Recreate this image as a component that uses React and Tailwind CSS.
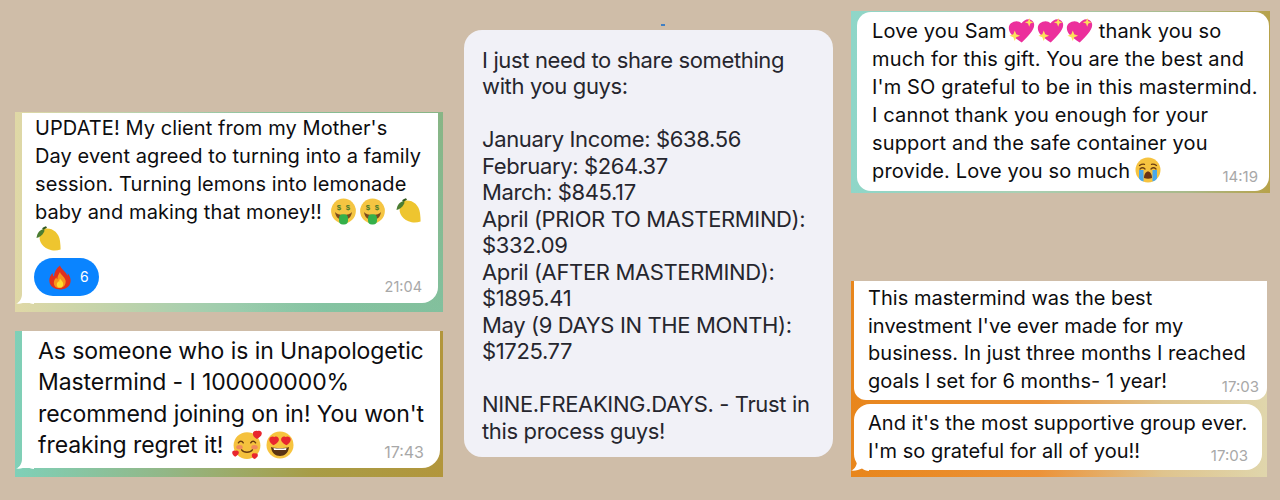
import React from "react";

const Money = () => (
  <svg viewBox="0 0 24 24" className="inline-block w-[27px] h-[27px] mx-[-1px] align-[-6px]">
    <circle cx="12" cy="11.5" r="11" fill="#f5c542" />
    <path d="M4.5 12.5c2 3.4 13 3.4 15 0-.6 5-3.4 7-7.5 7s-6.900-2-7.500-7z" fill="#7a4a1e" />
    <rect x="8" y="14.500" width="8" height="9" rx="3.500" fill="#35b04a" />
    <text x="8" y="11" fontSize="7" fontWeight="700" textAnchor="middle" fill="#4a7a2a" fontFamily="Liberation Sans, sans-serif">$</text>
    <text x="16" y="11" fontSize="7" fontWeight="700" textAnchor="middle" fill="#4a7a2a" fontFamily="Liberation Sans, sans-serif">$</text>
  </svg>
);

const Lemon = () => (
  <svg viewBox="0 0 26 26" className="inline-block w-[26px] h-[26px] align-[-5px]">
    <path d="M8 3c7-2 15 3 16 12 .4 3 .6 6 .6 8.500-3 1-6 1.500-9 .7C7 22.500 2 15 4 9c.7-2.500 2-5 4-6z" fill="#eec52f" />
    <path d="M8 3c-4 .5-7 4-7.500 9 3-.5 6-3 7.500-6 .5-1.200.5-2 0-3z" fill="#4c7d32" />
    <path d="M6 2.500c1.500-1.300 3-2 4-2.200l1 1.500-3 1.700z" fill="#33591f" />
  </svg>
);

const Fire = () => (
  <svg viewBox="0 0 24 26" className="inline-block w-[22px] h-[25px]">
    <path d="M12 0c1 4 7 7 8 11 .5-1 .6-2 .4-3 3 4 4 8 2.500 12-1.500 3.700-6 6-11 6s-9.500-2.500-11-6.500C-.500 15 1 11 4 8c0 1.500.3 3 1.500 4C5.500 7.500 8 3 12 0z" fill="#e0301e" />
    <path d="M12 7c.6 3 5 5 6 9 .8 3.500-1 8-6 8.500S4.500 21 5.500 17c.5-2 1.700-3 2.500-4 .2 1 .5 1.500 1.200 2C9 12 10.500 9.500 12 7z" fill="#f7931e" />
    <path d="M12 14c1 2 3.500 3 3.500 6 0 2.500-1.500 4-3.500 4s-4-1.500-3.500-4c.3-1.500 1.200-2 1.800-3 .3.500.5.800.8 1 0-1.500.2-2.800.9-4z" fill="#ffdc2e" />
  </svg>
);

const Hearts = () => (
  <svg viewBox="0 0 28 28" className="inline-block w-[30px] h-[30px] align-[-7px]">
    <circle cx="14" cy="14.500" r="12.500" fill="#f5c13d" />
    <ellipse cx="7" cy="16" rx="3" ry="2" fill="#f08a5d" />
    <ellipse cx="21" cy="16" rx="3" ry="2" fill="#f08a5d" />
    <path d="M6 12c1-2 3.500-2 4.500 0M17.500 12c1-2 3.500-2 4.500 0M9 18.500c2 3 8 3 10 0" stroke="#6b3e12" strokeWidth="1.300" fill="none" strokeLinecap="round" />
    <path d="M24 1c1.800-1 4 .3 3.800 2.400-.2 2.300-2.800 3.600-4.500 5-1.800-1-4-3-3.800-5.300C19.700 1 22.300.200 24 1z" fill="#e8262f" />
    <path d="M3.500 19.500c1.300-.8 3 .2 2.900 1.800-.1 1.700-2.100 2.700-3.400 3.700-1.300-.8-3-2.300-2.800-4 .100-1.600 2-2.200 3.300-1.500z" fill="#e8262f" />
    <path d="M21.500 22c1.200-.7 2.800.2 2.600 1.700-.1 1.600-1.900 2.500-3.100 3.400-1.200-.7-2.700-2.100-2.500-3.700.1-1.500 1.800-2 3-1.400z" fill="#e8262f" />
  </svg>
);

const HeartEyes = () => (
  <svg viewBox="0 0 28 28" className="inline-block w-[28px] h-[28px] align-[-6px]">
    <circle cx="14" cy="14" r="13.500" fill="#f7c43f" />
    <path d="M5 16c2.500 1.500 15.500 1.500 18 0-.5 6-4.500 9-9 9s-8.500-3-9-9z" fill="#5a3312" />
    <path d="M7.500 17c3.500.8 9.500.8 13 0l-.5 2H8z" fill="#fff" />
    <path d="M8.500 6c2-1.300 4.600.2 4.400 2.700-.2 2.700-3.300 4.200-5.300 5.600C5.600 13 3 10.800 3.300 8.200 3.500 5.700 6.500 4.800 8.500 6zM19.500 6c2-1.200 5 -.3 5.200 2.200.3 2.600-2.300 4.800-4.300 6.100-2-1.400-5.100-2.900-5.300-5.600C14.900 6.200 17.500 4.700 19.500 6z" fill="#e8262f" />
  </svg>
);

const Sparkle = () => (
  <svg viewBox="0 0 28 26" className="inline-block w-[27px] h-[25px] align-[-5px]">
    <path d="M14 5.500C16.500 1.500 22-.500 25.500 3c3.500 3.800 1 9-2.500 13-2.500 3-5.500 6-8.800 9.500C10.500 23 6.500 20.500 3.800 17.500.500 14-.500 8.500 3 5.500 6.500 2.500 11.500 2.500 14 5.500z" fill="#ec2f9c" />
    <path d="M22 0l1.200 3.300L26.500 4.500l-3.300 1.200L22 9l-1.200-3.300L17.500 4.500l3.300-1.200zM7 13l1.500 4 4 1.500-4 1.500L7 24l-1.500-4-4-1.500 4-1.500z" fill="#fde15a" />
  </svg>
);

const Crying = () => (
  <svg viewBox="0 0 26 26" className="inline-block w-[26px] h-[26px] align-[-5px]">
    <circle cx="13" cy="13" r="12.500" fill="#f6c340" />
    <path d="M4.500 8.500c1.500-1 3.500-1.500 5-1.200M21.500 8.500c-1.500-1-3.500-1.500-5-1.200M5 12c1.500-1.500 3.500-1.500 5 0M16 12c1.500-1.500 3.500-1.500 5 0" stroke="#6b3e12" strokeWidth="1.300" fill="none" strokeLinecap="round" />
    <path d="M9 21c0-4 2-6.500 4-6.500s4 2.500 4 6.500c-2.500 1-5.500 1-8 0z" fill="#6b3413" />
    <path d="M4 13h4.500v11.500C6.500 24 5 23 4 21.500zM17.500 13H22v8.500c-1 1.500-2.500 2.500-4.500 3z" fill="#4aa8ea" />
  </svg>
);

// little curl at the bottom left of a chat bubble
const Tail = ({ className }) => (
  <svg viewBox="0 0 18 10" className={"absolute w-[18px] h-[10px] " + className}>
    <path d="M6 0C6 4 4 8 0 9.600 4 10.200 8 9 11 7.500 13 9 15 9.800 18 10V0z" fill="#fff" />
  </svg>
);

const Time = ({ children, className }) => (
  <span className={"absolute leading-[16px] tracking-normal text-[#a8a8a8] " + className}>{children}</span>
);

export default function App() {
  return (
    <div className="w-[1280px] h-[500px] overflow-hidden bg-[#cfbda8] text-[#0d0d0f] font-['Inter','Liberation_Sans',sans-serif] relative flex pl-[15px] whitespace-nowrap">
      {/* left column */}
      <div className="w-[428px] pt-[112px] flex flex-col gap-[19px]">
        <div className="h-[200px] pl-[7px] pr-[5px] pt-[1px] pb-[9px] bg-[radial-gradient(circle_at_top_right,#88b585_0%,#88b58500_60%),linear-gradient(90deg,#e0d8a6_0%,#a9cfae_40%,#84c7a9_72%,#80c5a8_100%)]">
          <div className="relative h-full bg-white rounded-br-[16px] pl-[14px] pt-[1px] text-[20px] leading-[28px] tracking-[0.08px]">
            <div className="ml-[-1px]">UPDATE! My client from my Mother's</div>
            <div className="ml-[-1px]">Day event agreed to turning into a family</div>
            <div className="ml-[-1px]">session. Turning lemons into lemonade</div>
            <div className="ml-[-1px]">baby and making that money!! <span className="ml-[3px]"><Money /></span><span className="ml-[4px]"><Money /></span><span className="ml-[11px]"><Lemon /></span></div>
            <div><Lemon /></div>
            <div className="mt-[4px] ml-[-2px] w-[65px] h-[38px] rounded-full bg-[#0a84ff] flex items-center pl-[15px] gap-[9px] text-white text-[14px]">
              <Fire /> 6
            </div>
            <Time className="right-[16px] bottom-[8px] text-[14.500px]">21:04</Time>
            <Tail className="left-[-6px] bottom-[-1px]" />
          </div>
        </div>

        <div className="h-[146px] pl-[7px] pr-[3px] pb-[9px] bg-[linear-gradient(90deg,#7fd0b8_0%,#92b787_35%,#a89c45_70%,#b2963c_100%)]">
          <div className="relative h-full bg-white rounded-br-[18px] pl-[16px] pt-[5px] text-[23px] leading-[31.300px] tracking-[-0.08px]">
            <div>As someone who is in Unapologetic</div>
            <div>Mastermind - I 100000000%</div>
            <div>recommend joining on in! You won't</div>
            <div>freaking regret it! <span className="ml-[2px]"><Hearts /></span><span className="ml-[4px]"><HeartEyes /></span></div>
            <Time className="right-[16px] bottom-[8px] text-[16px]">17:43</Time>
            <Tail className="left-[-6px] bottom-[-1px]" />
          </div>
        </div>
      </div>

      {/* middle card */}
      <div className="ml-[21px] mt-[30px] w-[369px] h-[427px] rounded-[18px] bg-[#f1f1f7] pl-[18px] pt-[16.500px] text-[#26262e] text-[22px] leading-[26.500px] tracking-[-0.36px] relative">
        <div>I just need to share something</div>
        <div>with you guys:</div>
        <div className="h-[26.500px]"></div>
        <div>January Income: $638.56</div>
        <div>February: $264.37</div>
        <div>March: $845.17</div>
        <div>April (PRIOR TO MASTERMIND):</div>
        <div>$332.09</div>
        <div>April (AFTER MASTERMIND):</div>
        <div>$1895.41</div>
        <div>May (9 DAYS IN THE MONTH):</div>
        <div>$1725.77</div>
        <div className="h-[26.500px]"></div>
        <div>NINE.FREAKING.DAYS. - Trust in</div>
        <div>this process guys!</div>
        <div className="absolute left-[197px] top-[-6px] w-[4px] h-[2px] bg-[#3f7fc4]"></div>
      </div>

      {/* right column */}
      <div className="ml-[18px] w-[419px] pt-[11px] flex flex-col gap-[88px]">
        <div className="h-[182px] pl-[6px] pr-[1px] pt-[1px] pb-[2px] bg-[linear-gradient(90deg,#8fd6c8_0%,#a9d0b4_40%,#a9b98a_80%,#b7a24a_100%)]">
          <div className="relative h-full bg-white rounded-[14px] pl-[15px] pt-[5px] text-[20px] leading-[28px] tracking-[0.15px]">
            <div>Love you Sam<span className="ml-[1px]"><Sparkle /></span><span className="ml-[2px]"><Sparkle /></span><span className="ml-[2px]"><Sparkle /></span><span className="ml-[6px]">thank you so</span></div>
            <div>much for this gift. You are the best and</div>
            <div>I'm SO grateful to be in this mastermind.</div>
            <div>I cannot thank you enough for your</div>
            <div>support and the safe container you</div>
            <div>provide. Love you so much <span className="ml-[-1px]"><Crying /></span></div>
            <Time className="right-[11px] bottom-[6px] text-[15px]">14:19</Time>
          </div>
        </div>

        <div className="w-[416px] h-[196px] pl-[3px] flex flex-col gap-[4px] bg-[linear-gradient(90deg,#e8861c_0%,#ec9238_45%,#dfc48e_75%,#e0d6ac_100%)]">
          <div className="relative h-[119px] bg-white rounded-b-[12px] pl-[15px] pt-[4px] text-[20px] leading-[27.500px] tracking-[0.03px]">
            <div className="ml-[-1px]">This mastermind was the best</div>
            <div className="ml-[-1px]">investment I've ever made for my</div>
            <div className="ml-[-1px]">business. In just three months I reached</div>
            <div className="ml-[-1px]">goals I set for 6 months- 1 year!</div>
            <Time className="right-[8px] bottom-[5px] text-[15px]">17:03</Time>
          </div>
          <div className="relative w-[408px] h-[66px] bg-white rounded-[16px] pl-[15px] pt-[6px] text-[20px] leading-[27.500px] tracking-[0.03px]">
            <div className="ml-[-1px]">And it's the most supportive group ever.</div>
            <div className="ml-[-1px]">I'm so grateful for all of you!!</div>
            <Time className="right-[14px] bottom-[6px] text-[15px]">17:03</Time>
            <Tail className="left-[-3px] bottom-[-1px]" />
          </div>
        </div>
      </div>
    </div>
  );
}
